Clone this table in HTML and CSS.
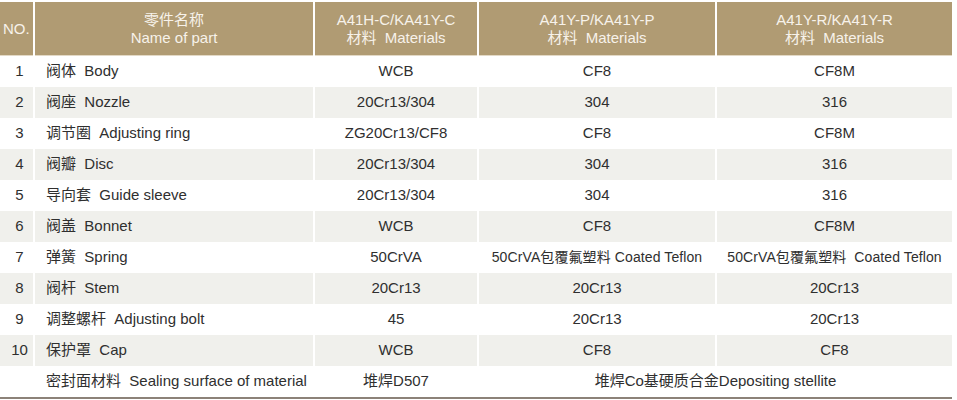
FILE: index.html
```html
<!DOCTYPE html>
<html>
<head>
<meta charset="utf-8">
<link rel="stylesheet" href="styles.css">
</head>
<body>
<table class="spec">
  <colgroup>
    <col class="c-no"><col class="c-name"><col class="c-a"><col class="c-b"><col class="c-c">
  </colgroup>
  <thead>
    <tr>
      <th class="no-h">NO.</th>
      <th>零件名称<br>Name of part</th>
      <th>A41H-C/KA41Y-C<br>材料&nbsp; Materials</th>
      <th>A41Y-P/KA41Y-P<br>材料&nbsp; Materials</th>
      <th>A41Y-R/KA41Y-R<br>材料&nbsp; Materials</th>
    </tr>
  </thead>
  <tbody>
    <tr><td class="no">1</td><td class="name">阀体&nbsp; Body</td><td>WCB</td><td>CF8</td><td>CF8M</td></tr>
    <tr class="alt"><td class="no">2</td><td class="name">阀座&nbsp; Nozzle</td><td>20Cr13/304</td><td>304</td><td>316</td></tr>
    <tr><td class="no">3</td><td class="name">调节圈&nbsp; Adjusting ring</td><td>ZG20Cr13/CF8</td><td>CF8</td><td>CF8M</td></tr>
    <tr class="alt"><td class="no">4</td><td class="name">阀瓣&nbsp; Disc</td><td>20Cr13/304</td><td>304</td><td>316</td></tr>
    <tr><td class="no">5</td><td class="name">导向套&nbsp; Guide sleeve</td><td>20Cr13/304</td><td>304</td><td>316</td></tr>
    <tr class="alt"><td class="no">6</td><td class="name">阀盖&nbsp; Bonnet</td><td>WCB</td><td>CF8</td><td>CF8M</td></tr>
    <tr><td class="no">7</td><td class="name">弹簧&nbsp; Spring</td><td>50CrVA</td><td class="narrow">50CrVA包覆氟塑料 Coated Teflon</td><td class="narrow">50CrVA包覆氟塑料&nbsp; Coated Teflon</td></tr>
    <tr class="alt"><td class="no">8</td><td class="name">阀杆&nbsp; Stem</td><td>20Cr13</td><td>20Cr13</td><td>20Cr13</td></tr>
    <tr><td class="no">9</td><td class="name">调整螺杆&nbsp; Adjusting bolt</td><td>45</td><td>20Cr13</td><td>20Cr13</td></tr>
    <tr class="alt"><td class="no">10</td><td class="name">保护罩&nbsp; Cap</td><td>WCB</td><td>CF8</td><td>CF8</td></tr>
    <tr class="last"><td class="no"></td><td class="name">密封面材料&nbsp; Sealing surface of material</td><td>堆焊D507</td><td colspan="2">堆焊Co基硬质合金Depositing stellite</td></tr>
  </tbody>
</table>
</body>
</html>
```
FILE: styles.css
```css
html, body {
  margin: 0;
  padding: 0;
  background: #ffffff;
}
body {
  padding-top: 2px;
  font-family: "Liberation Sans", Arial, "Noto Sans CJK SC", sans-serif;
  color: #2f2f2f;
}
.spec {
  width: 952px;
  border-collapse: collapse;
  table-layout: fixed;
}
.c-no { width: 34px; }
.c-name { width: 280px; }
.c-a { width: 164px; }
.c-b { width: 238px; }
.c-c { width: 236px; }

.spec th {
  background: #b09b73;
  color: #f7f2ea;
  font-weight: normal;
  font-size: 15px;
  line-height: 18px;
  height: 53px;
  padding: 0;
  text-align: center;
  vertical-align: middle;
  border-left: 2px solid #ffffff;
  border-bottom: 1px solid #e3d9c6;
}
.spec th.no-h {
  border-left: none;
  text-align: left;
  padding-left: 3px;
}
.spec td {
  height: 31px;
  padding: 0;
  box-sizing: border-box;
  font-size: 15px;
  line-height: 18px;
  text-align: center;
  vertical-align: middle;
  border-left: 2px solid #ffffff;
  white-space: nowrap;
}
.spec td.no {
  border-left: none;
  padding-left: 6px;
}
.spec td.name {
  text-align: left;
  padding-left: 11px;
}
.spec td.narrow {
  font-size: 14px;
  letter-spacing: 0.1px;
}
.spec tr.alt td {
  background: #f0f0ec;
}
.spec tr.last td {
  height: 32px;
  border-bottom: 2px solid #8c8278;
}
```
